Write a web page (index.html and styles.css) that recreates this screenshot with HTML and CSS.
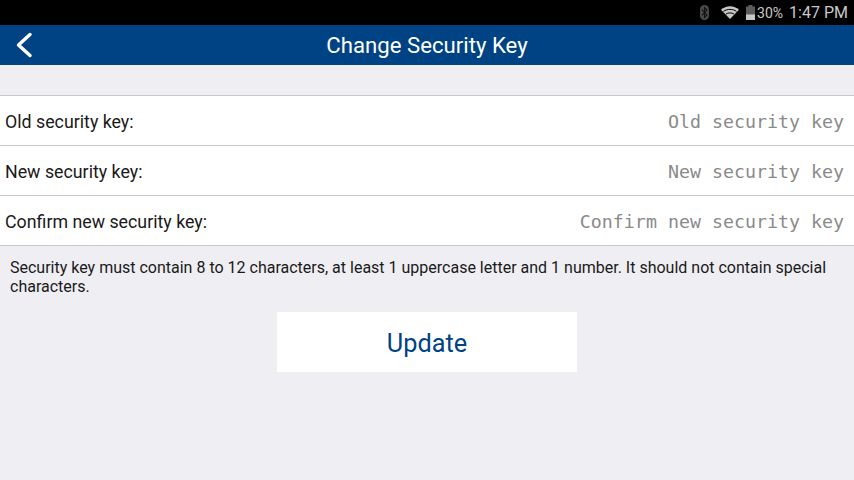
FILE: index.html
```html
<!DOCTYPE html>
<html lang="en">
<head>
    <meta charset="utf-8">
    <title>Change Security Key</title>
    <link rel="stylesheet" href="styles.css">
</head>
<body>
    <!-- Android status bar -->
    <div class="status-bar">
        <svg class="icon-bt" width="9" height="15" viewBox="0 0 9 15">
            <rect width="9" height="15" rx="4.500" fill="#4a4a4a"/>
            <path d="M1.800 4.700l5.200 5.200-2.500 2.600V2.500L7 5.100l-5.200 5.200" fill="none" stroke="#111" stroke-width="1.100"/>
        </svg>
        <svg class="icon-wifi" width="18" height="13" viewBox="0 0 18 13">
            <path d="M0 3.800C5-1 13-1 18 3.800L9 13z" fill="#c8c8c8"/>
            <path d="M2.500 5.400C6.300 2.700 11.700 2.700 15.500 5.400" fill="none" stroke="#000" stroke-width="1"/>
            <path d="M5 8C7.200 6.500 10.800 6.500 13 8" fill="none" stroke="#000" stroke-width="1"/>
        </svg>
        <svg class="icon-battery" width="9" height="15" viewBox="0 0 9 15">
            <path d="M2.500 0h4v1.500H9V15H0V1.500h2.500z" fill="#5c5c5c"/>
            <rect y="9.500" width="9" height="5.500" fill="#c8c8c8"/>
        </svg>
        <span class="battery-level">30%</span>
        <span class="clock">1:47 PM</span>
    </div>

    <header class="title-bar">
        <svg class="back" width="18" height="26" viewBox="0 0 18 26">
            <path d="M15 2.500L3.500 13 15 23.500" fill="none" stroke="#fff" stroke-width="3.400" stroke-linecap="round" stroke-linejoin="round"/>
        </svg>
        <h1>Change Security Key</h1>
    </header>

    <form class="key-form">
        <div class="field">
            <label for="oldKey">Old security key:</label>
            <input type="password" id="oldKey" placeholder="Old security key">
        </div>
        <div class="field">
            <label for="newKey">New security key:</label>
            <input type="password" id="newKey" placeholder="New security key">
        </div>
        <div class="field">
            <label for="confirmKey">Confirm new security key:</label>
            <input type="password" id="confirmKey" placeholder="Confirm new security key">
        </div>
    </form>

    <p class="hint">Security key must contain 8 to 12 characters, at least 1 uppercase letter and 1 number. It should not contain special characters.</p>

    <button type="button" class="update">Update</button>
</body>
</html>
```

FILE: styles.css
```css
html, body {
    margin: 0;
    height: 100%;
}
body {
    width: 854px;
    height: 480px;
    overflow: hidden;
    background-color: #efeef3;
    font-family: Roboto, sans-serif;
    color: #1a1a1a;
}

.status-bar {
    height: 25px;
    background-color: #000;
    display: flex;
    align-items: center;
    justify-content: flex-end;
    padding-right: 6px;
    color: #c8c8c8;
}
.icon-bt {
    margin-right: 12px;
}
.icon-wifi {
    margin-right: 7px;
}
.battery-level {
    font-size: 14px;
    margin-left: 2px;
}
.clock {
    font-size: 16px;
    margin-left: 6px;
}

.title-bar {
    height: 40px;
    background-color: #004385;
    color: #fff;
    display: flex;
    align-items: center;
    justify-content: center;
    position: relative;
}
.title-bar h1 {
    margin: 0;
    font-size: 22.200px;
    font-weight: 400;
}
.back {
    position: absolute;
    left: 15px;
    top: 7px;
}

.key-form {
    margin-top: 30px;
    background-color: #fff;
    border-top: 1px solid #c8c8c8;
}
.field {
    height: 50px;
    box-sizing: border-box;
    border-bottom: 1px solid #c8c8c8;
    display: flex;
    align-items: center;
    justify-content: space-between;
    padding: 2px 10px 0 5px;
}
.field label {
    font-size: 17.800px;
}
.field input {
    flex: 1;
    border: 0;
    outline: 0;
    padding: 0;
    text-align: right;
    background: transparent;
    font-family: "DejaVu Sans Mono", monospace;
    font-size: 18.300px;
}
.field input::placeholder {
    color: #8a8a8a;
    opacity: 1;
}

.hint {
    margin: 12px 10px 0;
    font-size: 16px;
    line-height: 19px;
}

.update {
    display: block;
    width: 300px;
    height: 60px;
    margin: 16px auto 0;
    padding: 2px 0 0;
    border: 0;
    background-color: #fff;
    color: #004385;
    font-family: Roboto, sans-serif;
    font-size: 25.300px;
}
```
